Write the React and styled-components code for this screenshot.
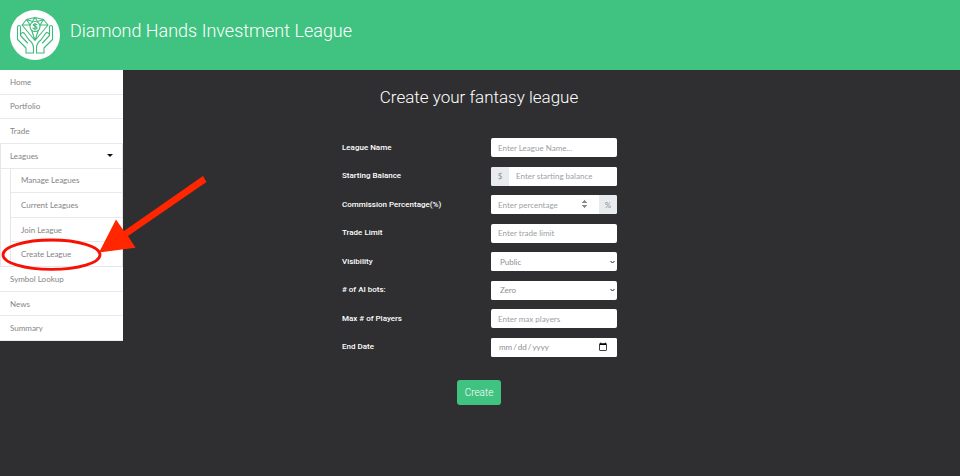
import React from "react";
import styled, { createGlobalStyle } from "styled-components";

const Global = createGlobalStyle`
  * { box-sizing: border-box; }
  body {
    margin: 0;
    background: #2f2f31;
    font-family: Roboto, "Open Sans", sans-serif;
    font-size: 8px;
    color: #fff;
  }
`;

const Header = styled.header`
  display: flex;
  height: 70px;
  padding: 10px;
  gap: 10px;
  background: #40c381;
`;

const Title = styled.h1`
  margin: 8px 0 0;
  font-size: 18px;
  line-height: 26px;
  font-weight: 300;
  white-space: nowrap;
`;

const Logo = styled.svg`
  width: 50px;
  height: 50px;
  flex: none;
`;

const Page = styled.div`
  display: grid;
  grid-template-columns: 123px 1fr 125px;
  align-items: start;
`;

const Sidebar = styled.nav`
  position: relative;
  display: flex;
  flex-direction: column;
  min-height: 271px;
  background: #fff;
`;

const NavLink = styled.a`
  display: flex;
  flex: 1;
  align-items: center;
  padding: 0 10px;
  border-bottom: 1px solid #e9e9e9;
  color: #858585;
  font: 400 8px/10px Lato, sans-serif;
  text-decoration: none;
`;

const Group = styled.div`
  display: flex;
  flex: 5;
  flex-direction: column;
  border: 1px solid #e6e6e6;
  border-top: 0;
`;

const GroupToggle = styled.button`
  display: flex;
  flex: 1;
  align-items: center;
  justify-content: space-between;
  padding: 0 9px;
  border: 0;
  border-bottom: 1px solid #e9e9e9;
  background: none;
  color: #858585;
  font: 400 8px/10px Lato, sans-serif;
`;

const Caret = styled.svg`
  width: 6px;
  height: 3px;
`;

const SubMenu = styled.div`
  display: flex;
  flex: 4;
  flex-direction: column;
  margin-left: 9px;
  border-left: 1px solid #e6e6e6;

  a:last-child { border-bottom: 0; }
`;

const Annotation = styled.svg`
  position: absolute;
  top: 100px;
  left: 0;
  width: 210px;
  height: 105px;
  pointer-events: none;
`;

const Main = styled.main`
  display: flex;
  flex-direction: column;
  align-items: center;
  padding-top: 15px;
`;

const Heading = styled.h2`
  margin: 0;
  font-size: 17px;
  line-height: 24px;
  font-weight: 300;
`;

const Form = styled.form`
  display: flex;
  flex-direction: column;
  align-items: center;
  gap: 23px;
  width: 276px;
  margin-top: 29px;
`;

const Fields = styled.div`
  display: flex;
  flex-direction: column;
  justify-content: space-between;
  width: 100%;
  min-height: 219px;
`;

const Row = styled.div`
  display: grid;
  grid-template-columns: 150px 1fr;
  align-items: center;
`;

const Label = styled.label`
  padding-left: 1px;
  font-size: 8px;
  line-height: 10px;
  font-weight: 500;
`;

const Control = styled.div`
  display: flex;
  height: 19px;
  overflow: hidden;
  border-radius: 2px;
  background: #fff;
`;

const Input = styled.input`
  flex: 1;
  min-width: 0;
  padding: 0 7px;
  border: 0;
  background: #fff;
  color: #8a8f94;
  font: 400 8px/10px Lato, sans-serif;

  &::placeholder { color: #9a9fa4; opacity: 1; }
  &::-webkit-inner-spin-button { opacity: 1; height: 11px; }
  &::-webkit-calendar-picker-indicator { width: 10px; height: 10px; padding: 0; margin: 0 2px 0 0; }
`;

const Select = styled.select`
  flex: 1;
  min-width: 0;
  padding: 0 9px;
  border: 0;
  background: #fff;
  color: #8a8f94;
  font: 400 8px/10px Lato, sans-serif;
  appearance: none;
`;

const Chevron = styled.svg`
  align-self: center;
  width: 5px;
  height: 4px;
  margin-right: 2px;
`;

const Addon = styled.span`
  display: flex;
  align-items: center;
  justify-content: center;
  width: 18px;
  background: #e9ecef;
  color: #8d9297;
  font: 400 8px/10px Lato, sans-serif;
`;

const Submit = styled.button`
  height: 25px;
  padding: 0 8px;
  border: 0;
  border-radius: 3px;
  background: #40c381;
  color: #fff;
  font: 300 10px/15px Roboto, sans-serif;
`;

const fields = [
  { id: "name", label: "League Name", placeholder: "Enter League Name..." },
  { id: "balance", label: "Starting Balance", placeholder: "Enter starting balance", before: "$" },
  { id: "commission", label: "Commission Percentage(%)", placeholder: "Enter percentage", type: "number", after: "%" },
  { id: "limit", label: "Trade Limit", placeholder: "Enter trade limit" },
  { id: "visibility", label: "Visibility", options: ["Public", "Private"] },
  { id: "bots", label: "# of AI bots:", options: ["Zero", "One", "Two"] },
  { id: "players", label: "Max # of Players", placeholder: "Enter max players" },
  { id: "end", label: "End Date", type: "date" },
];

function Field({ id, label, placeholder, type = "text", before, after, options }) {
  return (
    <Row>
      <Label htmlFor={id}>{label}</Label>
      <Control>
        {before && <Addon>{before}</Addon>}
        {options ? (
          <>
            <Select id={id}>{options.map((o) => <option key={o}>{o}</option>)}</Select>
            <Chevron viewBox="0 0 5 4"><path d="M.5 1 2.5 3 4.5 1" fill="none" stroke="#222" /></Chevron>
          </>
        ) : (
          <Input id={id} type={type} placeholder={placeholder} />
        )}
        {after && <Addon>{after}</Addon>}
      </Control>
    </Row>
  );
}

function Hand() {
  return (
    <path d="M16 43v-5L7.500 29.500V17c0-2 3-2 3 0v8.500l7 7.500M10.500 25.500c0-3 3-3.500 4-2l4.500 6.500c3.500 2.500 4.500 4.500 4.500 8v5H16" />
  );
}

export default function App() {
  return (
    <>
      <Global />
      <Header>
        <Logo viewBox="0 0 50 50" aria-hidden="true">
          <circle cx="25" cy="25" r="25" fill="#fff" />
          <g fill="none" stroke="#40b97c" strokeWidth="1.1" strokeLinejoin="round" strokeLinecap="round">
            <path d="M16.500 9.500 25 7.500l8.500 2 4.500 5.500L25 30.500 12 15zM12 15h8M30 15h8M16.500 9.500 20 15l5 15.500L30 15l3.500-5.500M16.500 9.500l6 2 2.500-4 2.500 4 6-2" />
            <circle cx="25" cy="16.500" r="5" fill="#fff" />
            <path d="M27 14.800c-.5-1-3.800-1.200-3.800.3 0 1.600 3.900 1 3.900 2.800 0 1.600-3.500 1.500-4.200.2M25 13.200v6.800" />
            <Hand />
            <g transform="matrix(-1 0 0 1 50 0)"><Hand /></g>
          </g>
        </Logo>
        <Title>Diamond Hands Investment League</Title>
      </Header>
      <Page>
        <Sidebar>
          <NavLink href="#home">Home</NavLink>
          <NavLink href="#portfolio">Portfolio</NavLink>
          <NavLink href="#trade">Trade</NavLink>
          <Group>
            <GroupToggle type="button" aria-expanded="true">
              Leagues
              <Caret viewBox="0 0 6 3"><path d="M0 0h6L3 3z" fill="#111" /></Caret>
            </GroupToggle>
            <SubMenu>
              <NavLink href="#manage">Manage Leagues</NavLink>
              <NavLink href="#current">Current Leagues</NavLink>
              <NavLink href="#join">Join League</NavLink>
              <NavLink href="#create">Create League</NavLink>
            </SubMenu>
          </Group>
          <NavLink href="#symbol">Symbol Lookup</NavLink>
          <NavLink href="#news">News</NavLink>
          <NavLink href="#summary">Summary</NavLink>
          <Annotation viewBox="0 0 210 105" aria-hidden="true">
            <ellipse cx="51.500" cy="84.700" rx="48.500" ry="14.700" fill="none" stroke="#f71105" strokeWidth="2.800" />
            <path d="M203 6l3.500 6-78.500 54 7.500 11.700L99 82.500l17-33 8 11.500z" fill="#ff2600" />
          </Annotation>
        </Sidebar>
        <Main>
          <Heading>Create your fantasy league</Heading>
          <Form onSubmit={(e) => e.preventDefault()}>
            <Fields>{fields.map((f) => <Field key={f.id} {...f} />)}</Fields>
            <Submit type="submit">Create</Submit>
          </Form>
        </Main>
      </Page>
    </>
  );
}
